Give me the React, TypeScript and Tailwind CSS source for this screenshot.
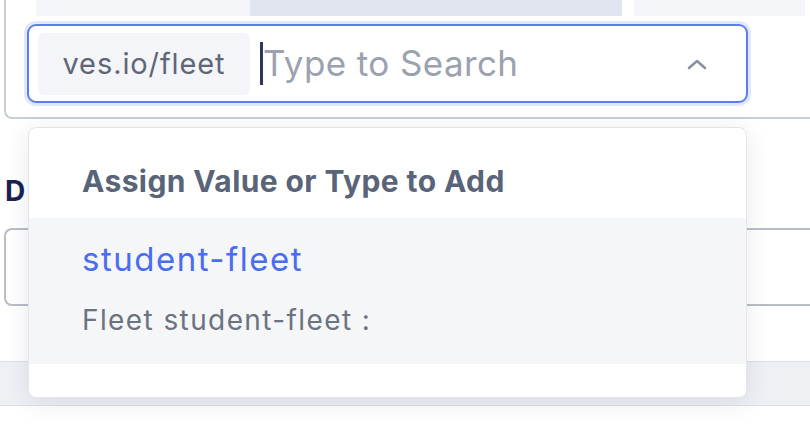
export default function App() {
  return (
    <div className="relative w-[810px] h-[426px] overflow-hidden bg-white font-['Inter',sans-serif]">
      {/* outer card holding the search field */}
      <div className="ml-[4px] h-[119px] border-l-2 border-b-2 border-[#c9cdd5] rounded-bl-[8px]">
        <div className="flex h-[16px]">
          <div className="w-[30px]" />
          <div className="w-[214px] bg-[#f4f5f8]" />
          <div className="w-[372px] bg-[#e1e5f0]" />
          <div className="w-[12px]" />
          <div className="w-[171px] bg-[#f4f5f8]" />
        </div>
        <div className="mt-[8px] ml-[21px] flex h-[79px] w-[721px] items-center rounded-[9px] border-2 border-[#5b7cf5] shadow-[0_0_0_3px_rgba(91,124,245,0.18)]">
          <div className="ml-[9px] flex h-[62px] w-[212px] items-center justify-center rounded-[6px] bg-[#f4f5f8] text-[29px] tracking-[0.9px] text-[#5f6677]">
            ves.io/fleet
          </div>
          <div className="ml-[10px] h-[43px] w-[3px] bg-[#2d3561]" />
          <div className="text-[35px] tracking-[0.4px] text-[#9ba1af]">Type to Search</div>
          <svg className="ml-auto mr-[38px]" width="22" height="14" viewBox="0 0 22 14" fill="none">
            <path d="M3 11 L11 4 L19 11" stroke="#8a90a0" strokeWidth="2.6" strokeLinecap="round" strokeLinejoin="round" />
          </svg>
        </div>
      </div>

      {/* content partially hidden behind the dropdown */}
      <div className="mt-[58px] ml-[5px] text-[28px] font-bold leading-none text-[#1a2250]">D</div>
      <div className="mt-[23px] flex h-[78px]">
        <div className="ml-[4px] w-[60px] rounded-l-[8px] border-2 border-r-0 border-[#b9bdc6]" />
        <div className="ml-auto w-[70px] border-y-2 border-[#b9bdc6]" />
      </div>
      <div className="mt-[55px] h-[45px] border-y border-[#dcdfe7] bg-[#eef0f4]" />

      {/* dropdown menu */}
      <div className="absolute left-[28px] top-[127px] w-[719px] h-[271px] overflow-hidden rounded-[8px] border border-[#e3e5eb] bg-white shadow-[0_4px_24px_rgba(30,40,80,0.10)]">
        <div className="flex h-[90px] items-center pl-[53px] pt-[16px] text-[30px] font-bold tracking-[0.4px] text-[#5a6478]">
          Assign Value or Type to Add
        </div>
        <div className="h-[146px] bg-[#f5f6f8] pl-[53px]">
          <div className="pt-[20px] text-[33px] leading-[42px] tracking-[1.5px] text-[#4a6cf0]">student-fleet</div>
          <div className="mt-[19px] text-[28px] tracking-[1.4px] text-[#6b7280]">Fleet student-fleet :</div>
        </div>
      </div>
    </div>
  )
}
